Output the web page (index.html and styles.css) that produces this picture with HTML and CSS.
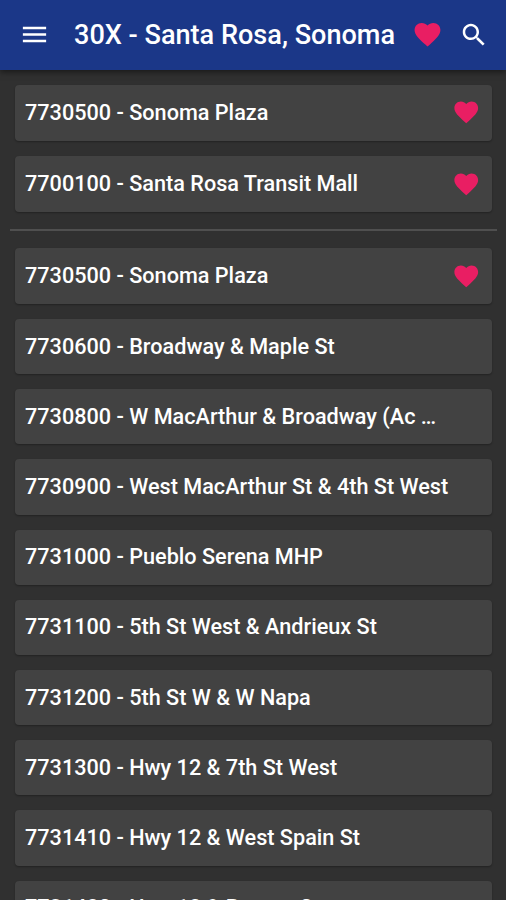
FILE: index.html
```html
<!DOCTYPE html>
<html lang="en">
<head>
<meta charset="utf-8">
<title>30X - Santa Rosa, Sonoma</title>
<link rel="stylesheet" href="styles.css">
</head>
<body>
<svg class="defs" aria-hidden="true">
  <symbol id="heart" viewBox="0 0 24 24"><path d="M12 21.35l-1.45-1.32C5.4 15.36 2 12.28 2 8.5 2 5.42 4.42 3 7.5 3c1.74 0 3.41.81 4.5 2.09C13.09 3.81 14.76 3 16.5 3 19.58 3 22 5.42 22 8.5c0 3.78-3.4 6.86-8.55 11.54L12 21.35z"/></symbol>
</svg>
<header class="bar">
  <svg class="menu" viewBox="0 0 24 24"><path d="M3 18h18v-2H3v2zm0-5h18v-2H3v2zm0-7v2h18V6H3z"/></svg>
  <h1 class="title">30X - Santa Rosa, Sonoma</h1>
  <svg class="bar-heart"><use href="#heart"/></svg>
  <svg class="search" viewBox="0 0 24 24"><path d="M15.5 14h-.79l-.28-.27C15.41 12.59 16 11.11 16 9.5 16 5.91 13.09 3 9.5 3S3 5.91 3 9.5 5.91 16 9.5 16c1.61 0 3.09-.59 4.23-1.57l.27.28v.79l5 4.99L20.49 19l-4.99-5zm-6 0C7.01 14 5 11.99 5 9.5S7.01 5 9.5 5 14 7.01 14 9.5 11.99 14 9.5 14z"/></svg>
</header>
<main>
  <ul class="stops">
    <li class="stop saved"><span>7730500 - Sonoma Plaza</span><svg class="heart"><use href="#heart"/></svg></li>
    <li class="stop saved"><span>7700100 - Santa Rosa Transit Mall</span><svg class="heart"><use href="#heart"/></svg></li>
  </ul>
  <hr class="divider">
  <ul class="stops">
    <li class="stop saved"><span>7730500 - Sonoma Plaza</span><svg class="heart"><use href="#heart"/></svg></li>
    <li class="stop"><span>7730600 - Broadway &amp; Maple St</span></li>
    <li class="stop"><span>7730800 - W MacArthur &amp; Broadway (Ac …</span></li>
    <li class="stop"><span>7730900 - West MacArthur St &amp; 4th St West</span></li>
    <li class="stop"><span>7731000 - Pueblo Serena MHP</span></li>
    <li class="stop"><span>7731100 - 5th St West &amp; Andrieux St</span></li>
    <li class="stop"><span>7731200 - 5th St W &amp; W Napa</span></li>
    <li class="stop"><span>7731300 - Hwy 12 &amp; 7th St West</span></li>
    <li class="stop"><span>7731410 - Hwy 12 &amp; West Spain St</span></li>
    <li class="stop"><span>7731420 - Hwy 12 &amp; Ramon St</span></li>
  </ul>
</main>
</body>
</html>
```
FILE: styles.css
```css
* { box-sizing: border-box; }
html, body { margin: 0; height: 900px; overflow: hidden; }
body {
  background: #303030;
  color: #fff;
  font-family: Roboto, "Liberation Sans", sans-serif;
  font-weight: 500;
}
.defs { display: none; }
.bar {
  position: relative;
  display: flex;
  align-items: center;
  height: 69.5px;
  padding: 0 17.5px 0 19px;
  background: #1b3788;
  box-shadow: 0 2px 6px rgba(0, 0, 0, 0.5);
}
svg { flex: none; fill: #fff; }
.menu { width: 31px; height: 31px; }
.title {
  flex: 1;
  margin: 0 0 0 24px;
  font-size: 27.08px;
  font-weight: 500;
  line-height: 36px;
  white-space: nowrap;
}
.bar-heart { width: 31px; height: 31px; margin-right: 16px; fill: #e91e63; }
.search { width: 30px; height: 30px; }
main { padding: 15px 14px 0 15px; }
.stops {
  display: flex;
  flex-direction: column;
  gap: 15px;
  margin: 0;
  padding: 0;
  list-style: none;
}
.stop {
  display: flex;
  align-items: center;
  justify-content: space-between;
  flex: none;
  height: 55.2px;
  padding: 0 12px 0 10px;
  border-radius: 4px;
  background: #424242;
  box-shadow: 0 1px 2px rgba(0, 0, 0, 0.3);
  font-size: 21.65px;
  line-height: 30px;
  white-space: nowrap;
}
.saved { height: 56.2px; }
.heart { width: 28.5px; height: 28.5px; fill: #e91e63; }
.divider {
  height: 2px;
  margin: 17px -5px;
  border: 0;
  background: #4f4f4f;
}
```
